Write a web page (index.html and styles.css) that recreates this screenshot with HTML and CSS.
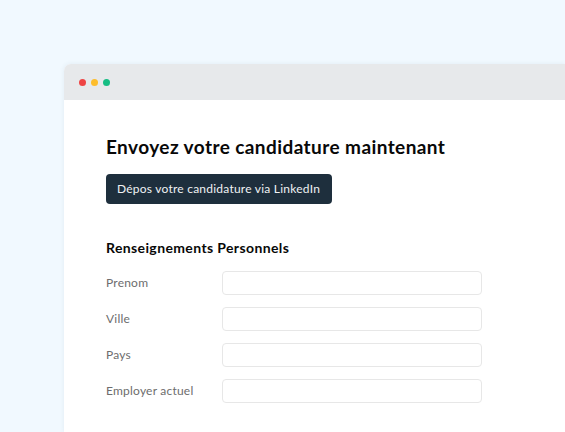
FILE: index.html
```html
<!DOCTYPE html>
<html lang="fr">
<head>
<meta charset="utf-8">
<title>Candidature</title>
<link rel="stylesheet" href="styles.css">
</head>
<body>
<main class="window">
  <header class="titlebar">
    <span class="dot dot-red"></span>
    <span class="dot dot-yellow"></span>
    <span class="dot dot-green"></span>
  </header>
  <form class="content">
    <h1>Envoyez votre candidature maintenant</h1>
    <button class="apply" type="button">Dépos votre candidature via LinkedIn</button>
    <h2>Renseignements Personnels</h2>
    <div class="fields">
      <label class="field"><span>Prenom</span><input type="text"></label>
      <label class="field"><span>Ville</span><input type="text"></label>
      <label class="field"><span>Pays</span><input type="text"></label>
      <label class="field"><span>Employer actuel</span><input type="text"></label>
    </div>
  </form>
</main>
</body>
</html>
```

FILE: styles.css
```css
* { box-sizing: border-box; }
body {
  margin: 0;
  height: 432px;
  padding: 64px 0 0 64.4px;
  overflow: hidden;
  background: #f1f9ff;
  font-family: Lato, "Liberation Sans", sans-serif;
}
.window {
  height: 368px;
  background: #fff;
  border-top-left-radius: 7px;
  box-shadow: 0 0 5px rgba(60, 90, 110, .09);
}
.titlebar {
  height: 36px;
  margin-right: .5px;
  padding-left: 14.6px;
  display: flex;
  align-items: center;
  gap: 5px;
  background: #e7e9eb;
  border-top-left-radius: 7px;
}
.dot { width: 7px; height: 7px; border-radius: 50%; }
.dot-red { background: #ee4444; }
.dot-yellow { background: #fdbd2c; }
.dot-green { background: #16bd83; }
.content { padding: 34px 0 0 41.6px; }
h1, h2 { margin: 0; color: #080808; white-space: nowrap; }
h1 {
  font-size: 19px;
  line-height: 26px;
  font-weight: 700;
  letter-spacing: .42px;
}
.apply {
  display: flex;
  align-items: center;
  width: 226px;
  height: 30px;
  margin-top: 14px;
  padding: 0 0 1px 11px;
  border: 0;
  border-radius: 4px;
  background: #1e2f3d;
  color: #f0f2f4;
  font: 12px/18px Lato, "Liberation Sans", sans-serif;
  letter-spacing: .23px;
  white-space: nowrap;
}
h2 {
  margin-top: 34px;
  font-size: 14px;
  line-height: 20px;
  font-weight: 700;
  letter-spacing: .38px;
}
.fields { display: grid; gap: 12px; margin-top: 13px; }
.field {
  display: grid;
  grid-template-columns: 116.4px 260px;
  height: 24px;
  align-items: center;
  color: #6d6d6d;
  font-size: 12px;
  line-height: 16px;
  letter-spacing: .22px;
  white-space: nowrap;
}
input {
  width: 260px;
  height: 24px;
  padding: 0 6px;
  border: 1px solid #e7e7e7;
  border-radius: 4px;
  background: #fff;
  outline: 0;
}
```
